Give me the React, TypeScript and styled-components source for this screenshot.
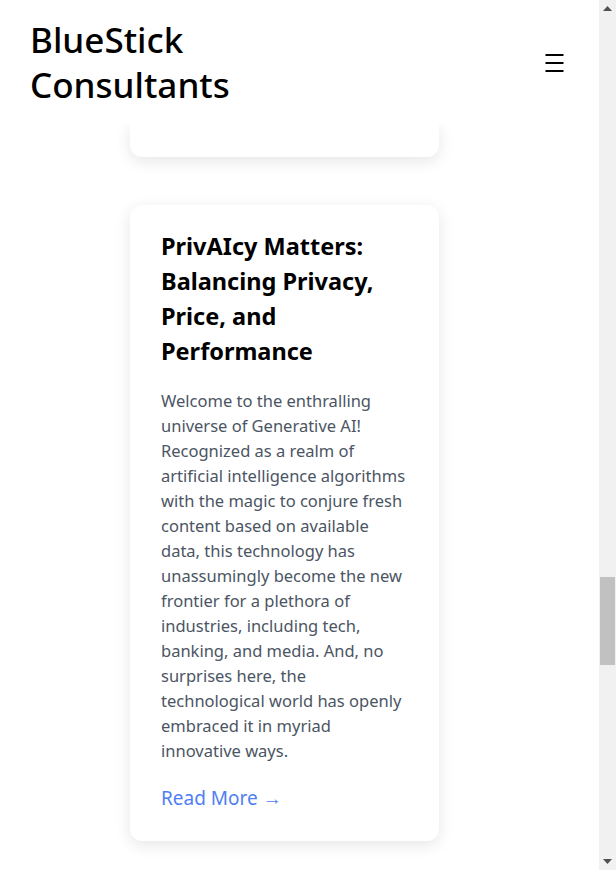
import React from "react";
import styled, { createGlobalStyle } from "styled-components";

const GlobalStyle = createGlobalStyle`
  body {
    margin: 0;
    background: #fff;
    color: #000;
    font-family: "Noto Sans", "Open Sans", sans-serif;
  }
`;

const Frame = styled.div`
  display: flex;
  height: 100vh;
  overflow: hidden;
`;

const Page = styled.div`
  flex: 1;
  display: flex;
  flex-direction: column;
  min-width: 0;
  overflow: hidden;
`;

const Header = styled.header`
  position: relative;
  z-index: 1;
  display: flex;
  align-items: center;
  justify-content: space-between;
  padding: 17px 35px 17px 30px;
  background: #fff;
`;

const Brand = styled.h1`
  margin: 0;
  max-width: 240px;
  font-size: 35px;
  line-height: 45px;
  font-weight: 500;
`;

const MenuButton = styled.button`
  display: flex;
  padding: 0;
  margin-top: 2px;
  border: none;
  background: none;
  color: #000;
  cursor: pointer;
`;

const Feed = styled.main`
  display: flex;
  flex-direction: column;
  align-items: flex-start;
  gap: 48px;
  padding-left: 130px;
`;

const Card = styled.article`
  box-sizing: border-box;
  width: 309px;
  padding: 24px 29px 29px 31px;
  border-radius: 12px;
  background: #fff;
  box-shadow: 0 4px 16px rgba(0, 0, 0, 0.1);
`;

const CardEdge = styled(Card)`
  height: 33px;
  padding: 0;
  border-top-left-radius: 0;
  border-top-right-radius: 0;
`;

const Title = styled.h2`
  margin: 0 0 19px;
  font-size: 23.5px;
  line-height: 35px;
  font-weight: 700;
`;

const Excerpt = styled.p`
  margin: 0 0 21px;
  font-size: 16.5px;
  line-height: 25px;
  color: #4b5563;
`;

const ReadMore = styled.a`
  display: inline-block;
  font-size: 19px;
  line-height: 28px;
  color: #4f7ef3;
  text-decoration: none;
`;

const ScrollRail = styled.aside`
  display: flex;
  flex-direction: column;
  flex: 0 0 17px;
  background: #f1f1f1;
`;

const RailArrow = styled.div`
  display: flex;
  align-items: center;
  justify-content: center;
  height: 17px;
  color: #505050;
`;

const RailTrack = styled.div`
  position: relative;
  flex: 1;
`;

const Thumb = styled.div<{ $top: number; $size: number }>`
  position: absolute;
  left: 1px;
  right: 1px;
  top: ${(p) => p.$top}px;
  height: ${(p) => p.$size}px;
  background: #c1c1c1;
`;

const post = {
  title: "PrivAIcy Matters: Balancing Privacy, Price, and Performance",
  excerpt:
    "Welcome to the enthralling universe of Generative AI! Recognized as a realm of artificial intelligence algorithms with the magic to conjure fresh content based on available data, this technology has unassumingly become the new frontier for a plethora of industries, including tech, banking, and media. And, no surprises here, the technological world has openly embraced it in myriad innovative ways.",
};

function MenuIcon() {
  return (
    <svg width="19" height="18" viewBox="0 0 19 18" fill="none" stroke="currentColor" strokeWidth="2">
      <line x1="0.5" y1="1" x2="18.5" y2="1" />
      <line x1="0.5" y1="9" x2="18.5" y2="9" />
      <line x1="0.5" y1="17" x2="18.5" y2="17" />
    </svg>
  );
}

function Arrow({ down }: { down?: boolean }) {
  return (
    <svg width="9" height="5" viewBox="0 0 9 5" fill="currentColor">
      <polygon points={down ? "0,0 9,0 4.5,5" : "0,5 4.5,0 9,5"} />
    </svg>
  );
}

export default function App() {
  return (
    <>
      <GlobalStyle />
      <Frame>
        <Page>
          <Header>
            <Brand>BlueStick Consultants</Brand>
            <MenuButton aria-label="Menu">
              <MenuIcon />
            </MenuButton>
          </Header>
          <Feed>
            <CardEdge aria-hidden="true" />
            <Card>
              <Title>{post.title}</Title>
              <Excerpt>{post.excerpt}</Excerpt>
              <ReadMore href="#">Read More →</ReadMore>
            </Card>
          </Feed>
        </Page>
        <ScrollRail aria-hidden="true">
          <RailArrow>
            <Arrow />
          </RailArrow>
          <RailTrack>
            <Thumb $top={560} $size={88} />
          </RailTrack>
          <RailArrow>
            <Arrow down />
          </RailArrow>
        </ScrollRail>
      </Frame>
    </>
  );
}
